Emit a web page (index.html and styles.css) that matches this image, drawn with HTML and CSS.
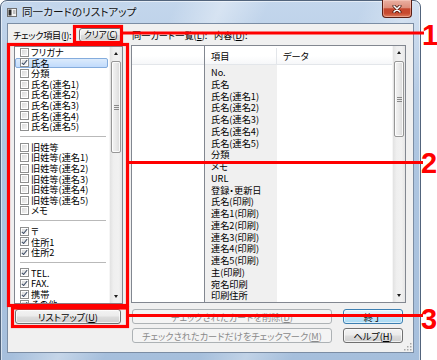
FILE: index.html
```html
<!DOCTYPE html>
<html lang="ja">
<head>
<meta charset="UTF-8" />
<meta name="viewport" content="width=device-width, initial-scale=1" />
<title>同一カードのリストアップ</title>
<link rel="stylesheet" href="styles.css">
</head>
<body>

<div class="stage">
  <div class="window">
    <div class="titlebar">
      <svg class="app-icon" width="10" height="9" viewBox="0 0 10 9" aria-hidden="true">
        <rect x="0.5" y="0.5" width="9" height="8" fill="#f2f2f2" stroke="#6f6f6f"/>
        <rect x="1.5" y="1.5" width="3" height="6" fill="#2b2b2b"/>
        <line x1="6" y1="3" x2="8.5" y2="3" stroke="#8a8a8a"/>
        <line x1="6" y1="5" x2="8.5" y2="5" stroke="#8a8a8a"/>
      </svg>
      <span class="title">同一カードのリストアップ</span>
      <button class="close-btn" aria-label="閉じる">
        <svg width="10" height="8" viewBox="0 0 10 8">
          <path d="M2 1 L8 7 M8 1 L2 7" stroke="#3a0d06" stroke-width="3" stroke-linecap="round"/>
          <path d="M2 1 L8 7 M8 1 L2 7" stroke="#fff" stroke-width="1.6" stroke-linecap="round"/>
        </svg>
      </button>
    </div>

    <div class="client">
      <div class="left-col">
        <div class="label-row">
          <span class="label label-check">チェック項目(<u>I</u>):</span>
          <button class="btn btn-clear">クリア(<u>C</u>)</button>
        </div>

        <div class="checklist">
          <div class="items">
            <div class="item"><span class="cb"></span>フリガナ</div>
            <div class="item sel"><span class="cb on"></span>氏名</div>
            <div class="item"><span class="cb"></span>分類</div>
            <div class="item"><span class="cb"></span>氏名(連名1)</div>
            <div class="item"><span class="cb"></span>氏名(連名2)</div>
            <div class="item"><span class="cb"></span>氏名(連名3)</div>
            <div class="item"><span class="cb"></span>氏名(連名4)</div>
            <div class="item"><span class="cb"></span>氏名(連名5)</div>
            <div class="sep"></div>
            <div class="item"><span class="cb"></span>旧姓等</div>
            <div class="item"><span class="cb"></span>旧姓等(連名1)</div>
            <div class="item"><span class="cb"></span>旧姓等(連名2)</div>
            <div class="item"><span class="cb"></span>旧姓等(連名3)</div>
            <div class="item"><span class="cb"></span>旧姓等(連名4)</div>
            <div class="item"><span class="cb"></span>旧姓等(連名5)</div>
            <div class="item"><span class="cb"></span>メモ</div>
            <div class="sep"></div>
            <div class="item"><span class="cb on"></span>〒</div>
            <div class="item"><span class="cb on"></span>住所1</div>
            <div class="item"><span class="cb on"></span>住所2</div>
            <div class="sep"></div>
            <div class="item"><span class="cb on"></span>TEL.</div>
            <div class="item"><span class="cb on"></span>FAX.</div>
            <div class="item"><span class="cb on"></span>携帯</div>
            <div class="item"><span class="cb on"></span>その他</div>
          </div>
          <div class="vscroll">
            <div class="sb-btn"><span class="arrow up"></span></div>
            <div class="sb-track">
              <div class="thumb thumb-left"><span class="grip-lines"></span></div>
            </div>
            <div class="sb-btn"><span class="arrow down"></span></div>
          </div>
        </div>

        <button class="btn btn-listup">リストアップ(<u>U</u>)</button>
      </div>

      <div class="right-col">
        <div class="label-row">
          <span class="label label-cards">同一カード一覧(<u>L</u>):</span>
          <span class="label">内容(<u>D</u>):</span>
        </div>

        <div class="views">
          <div class="cardlist">
            <div class="lv-header"></div>
          </div>
          <div class="detail">
            <div class="detail-main">
              <div class="lv-header">
                <span class="col col-key">項目</span>
                <span class="col col-val">データ</span>
              </div>
              <div class="rows">
                <div class="keycol">
                  <div class="row">No.</div>
                  <div class="row">氏名</div>
                  <div class="row">氏名(連名1)</div>
                  <div class="row">氏名(連名2)</div>
                  <div class="row">氏名(連名3)</div>
                  <div class="row">氏名(連名4)</div>
                  <div class="row">氏名(連名5)</div>
                  <div class="row">分類</div>
                  <div class="row">メモ</div>
                  <div class="row">URL</div>
                  <div class="row">登録・更新日</div>
                  <div class="row">氏名(印刷)</div>
                  <div class="row">連名1(印刷)</div>
                  <div class="row">連名2(印刷)</div>
                  <div class="row">連名3(印刷)</div>
                  <div class="row">連名4(印刷)</div>
                  <div class="row">連名5(印刷)</div>
                  <div class="row">主(印刷)</div>
                  <div class="row">宛名印刷</div>
                  <div class="row">印刷住所</div>
                </div>
                <div class="valcol"></div>
              </div>
            </div>
            <div class="vscroll">
              <div class="sb-btn"><span class="arrow up"></span></div>
              <div class="sb-track">
                <div class="thumb thumb-detail"><span class="grip-lines"></span></div>
              </div>
              <div class="sb-btn"><span class="arrow down"></span></div>
            </div>
          </div>
        </div>

        <div class="actions">
          <div class="stack stack-wide">
            <button class="btn" disabled>チェックされたカードを削除(<u>D</u>)</button>
            <button class="btn" disabled>チェックされたカードだけをチェックマーク(<u>M</u>)</button>
          </div>
          <div class="stack stack-narrow">
            <button class="btn btn-default">終了</button>
            <button class="btn">ヘルプ(<u>H</u>)</button>
          </div>
        </div>
      </div>

      <svg class="size-grip" width="9" height="9" viewBox="0 0 9 9" aria-hidden="true">
        <rect x="7" y="1" width="1.5" height="1.5" fill="#a7a7a7"/>
        <rect x="4" y="4" width="1.5" height="1.5" fill="#a7a7a7"/>
        <rect x="7" y="4" width="1.5" height="1.5" fill="#a7a7a7"/>
        <rect x="1" y="7" width="1.5" height="1.5" fill="#a7a7a7"/>
        <rect x="4" y="7" width="1.5" height="1.5" fill="#a7a7a7"/>
        <rect x="7" y="7" width="1.5" height="1.5" fill="#a7a7a7"/>
      </svg>
    </div>
  </div>

  <!-- callouts drawn over the dialog -->
  <svg class="callouts" width="437" height="360" viewBox="0 0 437 360" aria-hidden="true">
    <g fill="none" stroke="#ff0000" stroke-width="3.2">
      <rect x="74.5" y="26.5" width="47" height="16"/>
      <line x1="122" y1="33" x2="424" y2="33"/>
      <rect x="8.5" y="44.5" width="119" height="261"/>
      <line x1="128" y1="162.5" x2="423" y2="162.5"/>
      <rect x="12.5" y="308" width="115" height="18.5"/>
      <line x1="128" y1="315.5" x2="423" y2="315.5"/>
    </g>
    <g class="num" fill="#ff0000">
      <text x="422" y="45">1</text>
      <text x="421" y="173">2</text>
      <text x="421" y="329">3</text>
    </g>
  </svg>
</div>

</body>
</html>
```

FILE: styles.css
```css
* {
  box-sizing: border-box;
}
body {
  margin: 0;
  width: 437px;
  height: 360px;
  overflow: hidden;
  background: #fff;
  font-family: "Noto Sans CJK JP", "Noto Sans", sans-serif;
  font-size: 9.2px;
  line-height: 12px;
  font-feature-settings: "palt";
  color: #000;
}
u {
  text-decoration-thickness: 1px;
  text-underline-offset: 1px;
}

.stage {
  position: relative;
  width: 437px;
  height: 360px;
}

/* window frame */
.window {
  position: relative;
  width: 421px;
  height: 362px;
  padding: 0 6px 7px;
  border: 1px solid #52647c;
  border-radius: 7px 7px 0 0;
  background:
    linear-gradient(115deg, rgba(255,255,255,0) 30%, rgba(255,255,255,.35) 38%, rgba(255,255,255,0) 46%, rgba(255,255,255,0) 62%, rgba(255,255,255,.3) 70%, rgba(255,255,255,0) 78%),
    linear-gradient(#c3d6ec, #aec6e1 40%, #a6bfdc);
  box-shadow: inset 0 0 0 1px rgba(255,255,255,.55);
}

.titlebar {
  height: 22px;
  display: flex;
  align-items: center;
  gap: 5px;
}
.app-icon {
  display: block;
  margin-top: 1px;
}
.title {
  font-size: 10.6px;
  line-height: 14px;
  color: #111;
  text-shadow: 0 0 5px rgba(255,255,255,.95);
}
.close-btn {
  position: absolute;
  top: -1px;
  right: 8px;
  width: 30px;
  height: 18px;
  padding: 0;
  display: flex;
  align-items: center;
  justify-content: center;
  border: 1px solid #5b1e14;
  border-top: none;
  border-radius: 0 0 4px 4px;
  background: linear-gradient(#eab0a2 0%, #de8e7c 45%, #c5472f 52%, #c84a2f 78%, #dd7d5e 100%);
  box-shadow: inset 0 0 0 1px rgba(255,215,205,.45);
}
.close-btn svg {
  display: block;
}

/* client area */
.client {
  position: relative;
  height: 330px;
  padding-left: 6px;
  border: 1px solid #7b8da4;
  background: #f0f0f0;
  display: grid;
  grid-template-columns: 109px 275px;
  column-gap: 8px;
  align-content: start;
}
.left-col,
.right-col {
  display: flex;
  flex-direction: column;
}

.label-row {
  height: 21px;
  padding-top: 1px;
  display: flex;
  align-items: center;
}
.label {
  white-space: nowrap;
}
.label-check {
  margin-left: -1px;
  margin-right: 8px;
  letter-spacing: -0.3px;
}
.label-cards {
  width: 83px;
  padding-left: 1px;
}

/* buttons */
.btn {
  font: inherit;
  font-feature-settings: "palt";
  height: 15px;
  padding: 0;
  line-height: 12px;
  color: #000;
  border: 1px solid #707070;
  border-radius: 3px;
  background: linear-gradient(#f3f3f3 0%, #ebebeb 48%, #dddddd 52%, #cfcfcf 100%);
  box-shadow: inset 0 0 0 1px rgba(255,255,255,.7);
  white-space: nowrap;
  overflow: hidden;
}
.btn:disabled {
  color: #8a8a8a;
  border-color: #adb2b5;
  background: #f4f4f4;
  box-shadow: none;
}
.btn-default {
  border-color: #3c7fb1;
  background: linear-gradient(#e5f4fc 0%, #d4eefb 48%, #bde4f8 52%, #a9d9f3 100%);
  box-shadow: inset 0 0 0 1px rgba(255,255,255,.6);
}
.btn-clear {
  width: 43px;
  height: 14px;
  font-size: 8.8px;
  letter-spacing: -0.2px;
}
.btn-listup {
  width: 106px;
  margin: 5px 0 0 1px;
}

/* check list */
.checklist {
  height: 258px;
  margin-top: 1px;
  display: flex;
  border: 1px solid #828790;
  background: #fff;
}
.items {
  flex: 1;
  overflow: hidden;
}
.item {
  height: 10.6px;
  line-height: 10.6px;
  display: flex;
  align-items: center;
  gap: 2px;
  padding-left: 5px;
  white-space: nowrap;
}
.item.sel {
  margin-right: 1px;
  padding-left: 4px;
  border: 1px solid #84acdd;
  border-radius: 2px;
  background: linear-gradient(#dcebfc, #c1dbfc);
}
.cb {
  position: relative;
  flex: none;
  width: 9px;
  height: 9px;
  border: 1px solid #8e8f8f;
  background: linear-gradient(135deg, #d6d6d6, #f8f8f8);
  box-shadow: inset 0 0 0 1px #fff;
}
.cb.on::after {
  content: "";
  position: absolute;
  left: 2.3px;
  top: 0;
  width: 2.4px;
  height: 4.8px;
  border: solid #3f4f68;
  border-width: 0 1.6px 1.6px 0;
  transform: rotate(40deg);
}
.sep {
  height: 10px;
  display: flex;
  align-items: center;
  padding: 0 3px 0 5px;
}
.sep::before {
  content: "";
  flex: 1;
  border-top: 1px solid #b9b9b9;
}

/* scroll bars */
.vscroll {
  width: 13px;
  display: flex;
  flex-direction: column;
  background: linear-gradient(90deg, #e2e2e2, #efefef 30%, #f1f1f1 70%, #e6e6e6);
  border-left: 1px solid #f6f6f6;
}
.sb-btn {
  height: 13px;
  display: flex;
  align-items: center;
  justify-content: center;
}
.arrow {
  width: 0;
  height: 0;
  border-left: 2.5px solid transparent;
  border-right: 2.5px solid transparent;
}
.arrow.up {
  border-bottom: 3px solid #1e1e1e;
}
.arrow.down {
  border-top: 3px solid #1e1e1e;
}
.sb-track {
  flex: 1;
  padding: 0 1px;
}
.thumb {
  display: flex;
  align-items: center;
  justify-content: center;
  border: 1px solid #979797;
  border-radius: 2px;
  background: linear-gradient(90deg, #f4f4f4, #e9e9e9 50%, #d9d9d9);
  box-shadow: inset 0 0 0 1px rgba(255,255,255,.8);
}
.thumb-left {
  height: 92px;
  margin-top: 1px;
}
.thumb-detail {
  height: 76px;
  margin-top: 2px;
}
.grip-lines {
  width: 5px;
  height: 5px;
  border-top: 1px solid #8a8a8a;
  border-bottom: 1px solid #8a8a8a;
  background: linear-gradient(#8a8a8a, #8a8a8a) center / 5px 1px no-repeat;
}

/* card list and detail view */
.views {
  height: 258px;
  display: flex;
  border: 1px solid #828790;
  background: #fff;
}
.cardlist {
  width: 73px;
  border-right: 1px solid #828790;
}
.lv-header {
  height: 19px;
  padding-top: 2px;
  display: flex;
  align-items: center;
  border-bottom: 1px solid #e3e6ea;
  background: linear-gradient(#ffffff, #ffffff 55%, #f6f7f9);
}
.detail {
  flex: 1;
  display: flex;
}
.detail-main {
  flex: 1;
  display: flex;
  flex-direction: column;
}
.col {
  height: 100%;
  display: flex;
  align-items: center;
  padding-left: 6px;
}
.col-key {
  width: 72px;
  border-right: 1px solid #e3e6ea;
}
.rows {
  flex: 1;
  display: flex;
  overflow: hidden;
}
.keycol {
  width: 72px;
  padding-top: 2px;
  background: #f0f0f0;
}
.row {
  height: 11.75px;
  line-height: 11.75px;
  padding-left: 6px;
  white-space: nowrap;
}
.valcol {
  flex: 1;
}

/* bottom buttons */
.actions {
  margin-top: 6px;
  display: flex;
  gap: 11px;
}
.stack {
  display: flex;
  flex-direction: column;
  gap: 4px;
}
.stack-wide {
  width: 200px;
  margin-left: 1px;
}
.stack-narrow {
  width: 60px;
}

.size-grip {
  position: absolute;
  right: 1px;
  bottom: 1px;
}

/* red callouts */
.callouts {
  position: absolute;
  top: 0;
  left: 0;
  pointer-events: none;
}
.num text {
  font-family: "Liberation Sans", Arial, sans-serif;
  font-weight: 700;
  font-size: 29px;
}
```
